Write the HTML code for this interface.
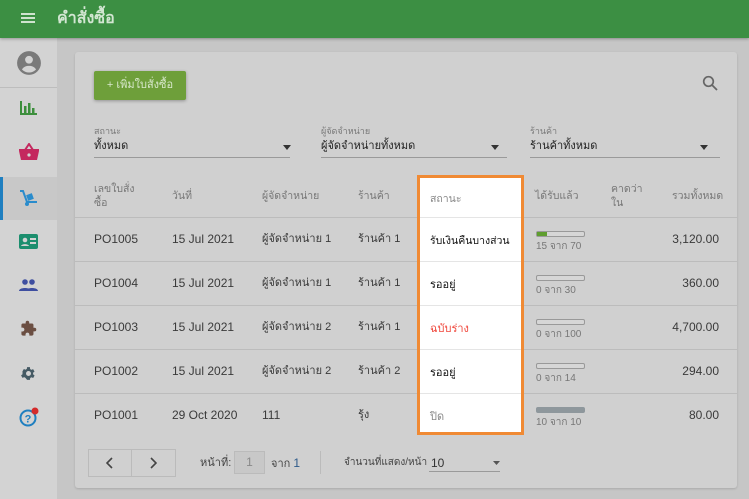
<!DOCTYPE html>
<html><head><meta charset="utf-8"><style>
*{box-sizing:border-box;margin:0;padding:0}
body{width:749px;height:499px;overflow:hidden;background:#c6c6c6;font-family:"Liberation Sans","Noto Sans CJK SC",sans-serif;font-size:12px;color:#3a3a3a;position:relative;line-height:14px}
.a{position:absolute}
.hdr{left:0;top:0;width:749px;height:38px;background:#3c8f43;box-shadow:0 1px 3px rgba(0,0,0,.3);z-index:2}
.side{left:0;top:38px;width:57px;height:461px;background:#d3d3d3}
.card{left:75px;top:52px;width:662px;height:436px;background:#d0d0d0;border-radius:3px;box-shadow:0 1px 2px rgba(0,0,0,.15)}
.t{white-space:nowrap;line-height:14px;height:14px}
.th{font-size:11px}
.g{color:#777}
.line{height:1px;background:#bcbcbc}
.sel{border-bottom:1px solid #9a9a9a}
.bar{width:49px;height:6px;border:1px solid #999;border-radius:2px;background:#d6d6d6}
</style></head><body>
<div class="a hdr">
<div class="a" style="left:21px;top:13px;width:14px;height:2px;background:#cfe3cf;box-shadow:0 4px 0 #cfe3cf,0 8px 0 #cfe3cf"></div>
<div class="a t" style="left:57px;top:10px;font-size:16px;line-height:18px;height:18px;font-weight:bold;color:#d2e6d2">คำสั่งซื้อ</div>
</div>
<div class="a side"></div>
<div class="a" style="left:0;top:87px;width:57px;height:1px;background:#bdbdbd"></div>
<svg class="a" style="left:16px;top:50px" width="26" height="26" viewBox="0 0 24 24"><circle cx="12" cy="12" r="11" fill="#7a7a7a"/><circle cx="12" cy="9" r="3.6" fill="#d3d3d3"/><path d="M5.5 18c1.5-2.5 4-3.3 6.5-3.3s5 .8 6.5 3.3c-1.7 1.8-4 2.8-6.5 2.8S7.2 19.8 5.5 18z" fill="#d3d3d3"/></svg>
<svg class="a" style="left:20px;top:101px" width="17" height="14"><rect x="0" y="0" width="2" height="14" fill="#3d8f3d"/><rect x="0" y="12" width="17" height="2" fill="#3d8f3d"/><rect x="4" y="5" width="2.5" height="8" fill="#3d8f3d"/><rect x="8" y="2" width="2.5" height="11" fill="#3d8f3d"/><rect x="12" y="7" width="2.5" height="6" fill="#3d8f3d"/></svg>
<svg class="a" style="left:19px;top:143px" width="20" height="17" viewBox="0 0 20 17"><path d="M6 7 10 1 14 7" stroke="#c4285e" stroke-width="2" fill="none"/><path d="M0 6h20v2l-2 9H2L0 8z" fill="#c4285e"/><circle cx="10" cy="12" r="1.6" fill="#d3d3d3"/></svg>
<div class="a" style="left:0;top:177px;width:57px;height:43px;background:#c8c8c8"></div>
<div class="a" style="left:0;top:177px;width:3px;height:43px;background:#1f7fc0"></div>
<svg class="a" style="left:19px;top:189px" width="20" height="18" viewBox="0 0 20 18"><path d="M1 2h3l4 11h10" stroke="#2a8ccc" stroke-width="2" fill="none"/><rect x="8" y="5" width="6" height="6" fill="#2a8ccc" transform="rotate(-20 11 8)"/><circle cx="8" cy="15" r="2" fill="#2a8ccc"/></svg>
<svg class="a" style="left:19px;top:234px" width="19" height="15"><rect width="19" height="15" rx="2" fill="#1c8e6e"/><circle cx="6" cy="6" r="2.3" fill="#d3d3d3"/><path d="M2 12c1-2.5 7-2.5 8 0z" fill="#d3d3d3"/><rect x="11" y="4" width="6" height="2" fill="#d3d3d3"/><rect x="11" y="8" width="6" height="2" fill="#d3d3d3"/></svg>
<svg class="a" style="left:19px;top:279px" width="19" height="12"><circle cx="6" cy="3" r="2.8" fill="#3e4ea0"/><circle cx="13" cy="3" r="2.8" fill="#3e4ea0"/><path d="M0 12c0-4 12-4 12 0z M7 12c0-4 12-4 12 0z" fill="#3e4ea0"/></svg>
<svg class="a" style="left:20px;top:320px" width="17" height="17" viewBox="0 0 24 24"><path d="M20.5 11H19V7c0-1.1-.9-2-2-2h-4V3.5a2.5 2.5 0 0 0-5 0V5H4c-1.1 0-2 .9-2 2v3.8h1.5c1.5 0 2.7 1.2 2.7 2.7S5 16.2 3.5 16.2H2V20c0 1.1.9 2 2 2h3.8v-1.5c0-1.5 1.2-2.7 2.7-2.7s2.7 1.2 2.7 2.7V22H17c1.1 0 2-.9 2-2v-4h1.5a2.5 2.5 0 0 0 0-5z" fill="#6b4e42"/></svg>
<svg class="a" style="left:20px;top:365px" width="17" height="17" viewBox="0 0 24 24"><path d="M19.4 13a7.5 7.5 0 0 0 0-2l2.1-1.6-2-3.5-2.5 1a7 7 0 0 0-1.7-1L15 3h-4l-.4 2.7a7 7 0 0 0-1.7 1l-2.5-1-2 3.5L4.6 11a7.5 7.5 0 0 0 0 2l-2.1 1.6 2 3.5 2.5-1a7 7 0 0 0 1.7 1L11 21h4l.4-2.7a7 7 0 0 0 1.7-1l2.5 1 2-3.5zM13 15.5a3.5 3.5 0 1 1 0-7 3.5 3.5 0 0 1 0 7z" fill="#455a64" transform="translate(-1 0)"/></svg>
<svg class="a" style="left:19px;top:407px" width="21" height="20"><circle cx="9" cy="11" r="7.5" stroke="#1f7fc0" stroke-width="2" fill="none"/><text x="9" y="15.5" font-size="11" font-weight="bold" fill="#1f7fc0" text-anchor="middle" font-family="Liberation Sans">?</text><circle cx="16" cy="4" r="3.5" fill="#d42b2b"/></svg>

<div class="a card"></div>
<div class="a t th" style="left:94px;top:71px;width:92px;height:29px;background:#6e9f3a;border-radius:2px;box-shadow:0 1px 3px rgba(0,0,0,.3);color:#d8e8cc;line-height:29px;text-align:center">+ เพิ่มใบสั่งซื้อ</div>
<svg class="a" style="left:702px;top:75px" width="16" height="16"><circle cx="6.5" cy="6.5" r="4.8" stroke="#666" stroke-width="1.7" fill="none"/><path d="M10 10l5 5" stroke="#666" stroke-width="1.8"/></svg>

<div class="a t g" style="left:94px;top:124px;font-size:9px">สถานะ</div>
<div class="a t th" style="left:94px;top:139px;color:#222">ทั้งหมด</div>
<div class="a sel" style="left:94px;top:157px;width:196px"></div>
<div class="a t g" style="left:321px;top:124px;font-size:9px">ผู้จัดจำหน่าย</div>
<div class="a t th" style="left:321px;top:139px;color:#222">ผู้จัดจำหน่ายทั้งหมด</div>
<div class="a sel" style="left:321px;top:157px;width:186px"></div>
<div class="a t g" style="left:530px;top:124px;font-size:9px">ร้านค้า</div>
<div class="a t th" style="left:530px;top:139px;color:#222">ร้านค้าทั้งหมด</div>
<div class="a sel" style="left:530px;top:157px;width:190px"></div>
<svg class="a" style="left:283px;top:145px" width="8" height="5"><path d="M0 0h8L4 5z" fill="#333"/></svg>
<svg class="a" style="left:491px;top:145px" width="8" height="5"><path d="M0 0h8L4 5z" fill="#333"/></svg>
<svg class="a" style="left:700px;top:145px" width="8" height="5"><path d="M0 0h8L4 5z" fill="#333"/></svg>

<div class="a g" style="left:94px;top:182px;font-size:10.5px;line-height:14px">เลขใบสั่ง<br>ซื้อ</div>
<div class="a t g" style="left:172px;top:189px;font-size:10.5px">วันที่</div>
<div class="a t g" style="left:262px;top:189px;font-size:10.5px">ผู้จัดจำหน่าย</div>
<div class="a t g" style="left:358px;top:189px;font-size:10.5px">ร้านค้า</div>
<div class="a t g" style="left:535px;top:189px;font-size:10.5px">ได้รับแล้ว</div>
<div class="a g" style="left:611px;top:182px;font-size:10.5px;line-height:14px">คาดว่า<br>ใน</div>
<div class="a t g" style="left:672px;top:189px;font-size:10.5px">รวมทั้งหมด</div>

<div class="a line" style="left:75px;top:217px;width:662px"></div>
<div class="a line" style="left:75px;top:261px;width:662px"></div>
<div class="a line" style="left:75px;top:305px;width:662px"></div>
<div class="a line" style="left:75px;top:349px;width:662px"></div>
<div class="a line" style="left:75px;top:393px;width:662px"></div>

<div class="a t" style="left:94px;top:232px">PO1005</div><div class="a t" style="left:172px;top:232px">15 Jul 2021</div><div class="a t th" style="left:262px;top:232px">ผู้จัดจำหน่าย 1</div><div class="a t th" style="left:358px;top:232px">ร้านค้า 1</div>
<div class="a t" style="left:94px;top:276px">PO1004</div><div class="a t" style="left:172px;top:276px">15 Jul 2021</div><div class="a t th" style="left:262px;top:276px">ผู้จัดจำหน่าย 1</div><div class="a t th" style="left:358px;top:276px">ร้านค้า 1</div>
<div class="a t" style="left:94px;top:320px">PO1003</div><div class="a t" style="left:172px;top:320px">15 Jul 2021</div><div class="a t th" style="left:262px;top:320px">ผู้จัดจำหน่าย 2</div><div class="a t th" style="left:358px;top:320px">ร้านค้า 1</div>
<div class="a t" style="left:94px;top:364px">PO1002</div><div class="a t" style="left:172px;top:364px">15 Jul 2021</div><div class="a t th" style="left:262px;top:364px">ผู้จัดจำหน่าย 2</div><div class="a t th" style="left:358px;top:364px">ร้านค้า 2</div>
<div class="a t" style="left:94px;top:408px">PO1001</div><div class="a t" style="left:172px;top:408px">29 Oct 2020</div><div class="a t" style="left:262px;top:408px">111</div><div class="a t th" style="left:358px;top:408px">รุ้ง</div>

<div class="a bar" style="left:536px;top:231px"><div style="width:10px;height:4px;background:#5f9e2f"></div></div><div class="a t g" style="left:536px;top:240px;font-size:10px">15 จาก 70</div>
<div class="a bar" style="left:536px;top:275px"></div><div class="a t g" style="left:536px;top:284px;font-size:10px">0 จาก 30</div>
<div class="a bar" style="left:536px;top:319px"></div><div class="a t g" style="left:536px;top:328px;font-size:10px">0 จาก 100</div>
<div class="a bar" style="left:536px;top:363px"></div><div class="a t g" style="left:536px;top:372px;font-size:10px">0 จาก 14</div>
<div class="a bar" style="left:536px;top:407px;background:#8e979c;border-color:#8e979c"></div><div class="a t g" style="left:536px;top:416px;font-size:10px">10 จาก 10</div>

<div class="a t" style="right:30px;top:232px">3,120.00</div>
<div class="a t" style="right:30px;top:276px">360.00</div>
<div class="a t" style="right:30px;top:320px">4,700.00</div>
<div class="a t" style="right:30px;top:364px">294.00</div>
<div class="a t" style="right:30px;top:408px">80.00</div>

<div class="a" style="left:417px;top:175px;width:107px;height:260px;background:#fff;border:3px solid #f08a34">
<div class="a t" style="left:10px;top:14px;color:#888;font-size:10.5px">สถานะ</div>
<div class="a" style="left:0;top:39px;width:101px;height:1px;background:#e5e5e5"></div>
<div class="a t th" style="left:10px;top:56px;color:#111;font-size:10.5px">รับเงินคืนบางส่วน</div>
<div class="a" style="left:0;top:83px;width:101px;height:1px;background:#e5e5e5"></div>
<div class="a t th" style="left:10px;top:100px;color:#111">รออยู่</div>
<div class="a" style="left:0;top:127px;width:101px;height:1px;background:#e5e5e5"></div>
<div class="a t th" style="left:10px;top:144px;color:#f0473c">ฉบับร่าง</div>
<div class="a" style="left:0;top:171px;width:101px;height:1px;background:#e5e5e5"></div>
<div class="a t th" style="left:10px;top:188px;color:#111">รออยู่</div>
<div class="a" style="left:0;top:215px;width:101px;height:1px;background:#e5e5e5"></div>
<div class="a t th" style="left:10px;top:232px;color:#888">ปิด</div>
</div>

<div class="a" style="left:88px;top:449px;width:88px;height:28px;border:1px solid #bbb"></div>
<div class="a" style="left:131px;top:449px;width:1px;height:28px;background:#bbb"></div>
<svg class="a" style="left:106px;top:457px" width="8" height="12"><path d="M6 1 1 6l5 5" stroke="#444" stroke-width="1.6" fill="none"/></svg>
<svg class="a" style="left:149px;top:457px" width="8" height="12"><path d="M2 1l5 5-5 5" stroke="#444" stroke-width="1.6" fill="none"/></svg>
<div class="a t th" style="left:200px;top:456px;color:#444">หน้าที่:</div>
<div class="a t" style="left:234px;top:451px;width:31px;height:23px;background:#c8c8c8;border:1px solid #bbb;text-align:center;line-height:21px;color:#888">1</div>
<div class="a t th" style="left:271px;top:456px;color:#444">จาก <span style="color:#2d5a8a;font-size:12px">1</span></div>
<div class="a" style="left:320px;top:451px;width:1px;height:23px;background:#bbb"></div>
<div class="a t th" style="left:344px;top:456px;color:#444;font-size:10px">จำนวนที่แสดง/หน้า</div>
<div class="a t" style="left:431px;top:456px;color:#333">10</div>
<div class="a sel" style="left:429px;top:471px;width:71px"></div>
<svg class="a" style="left:493px;top:461px" width="7" height="4"><path d="M0 0h7L3.5 4z" fill="#555"/></svg>
</body></html>
